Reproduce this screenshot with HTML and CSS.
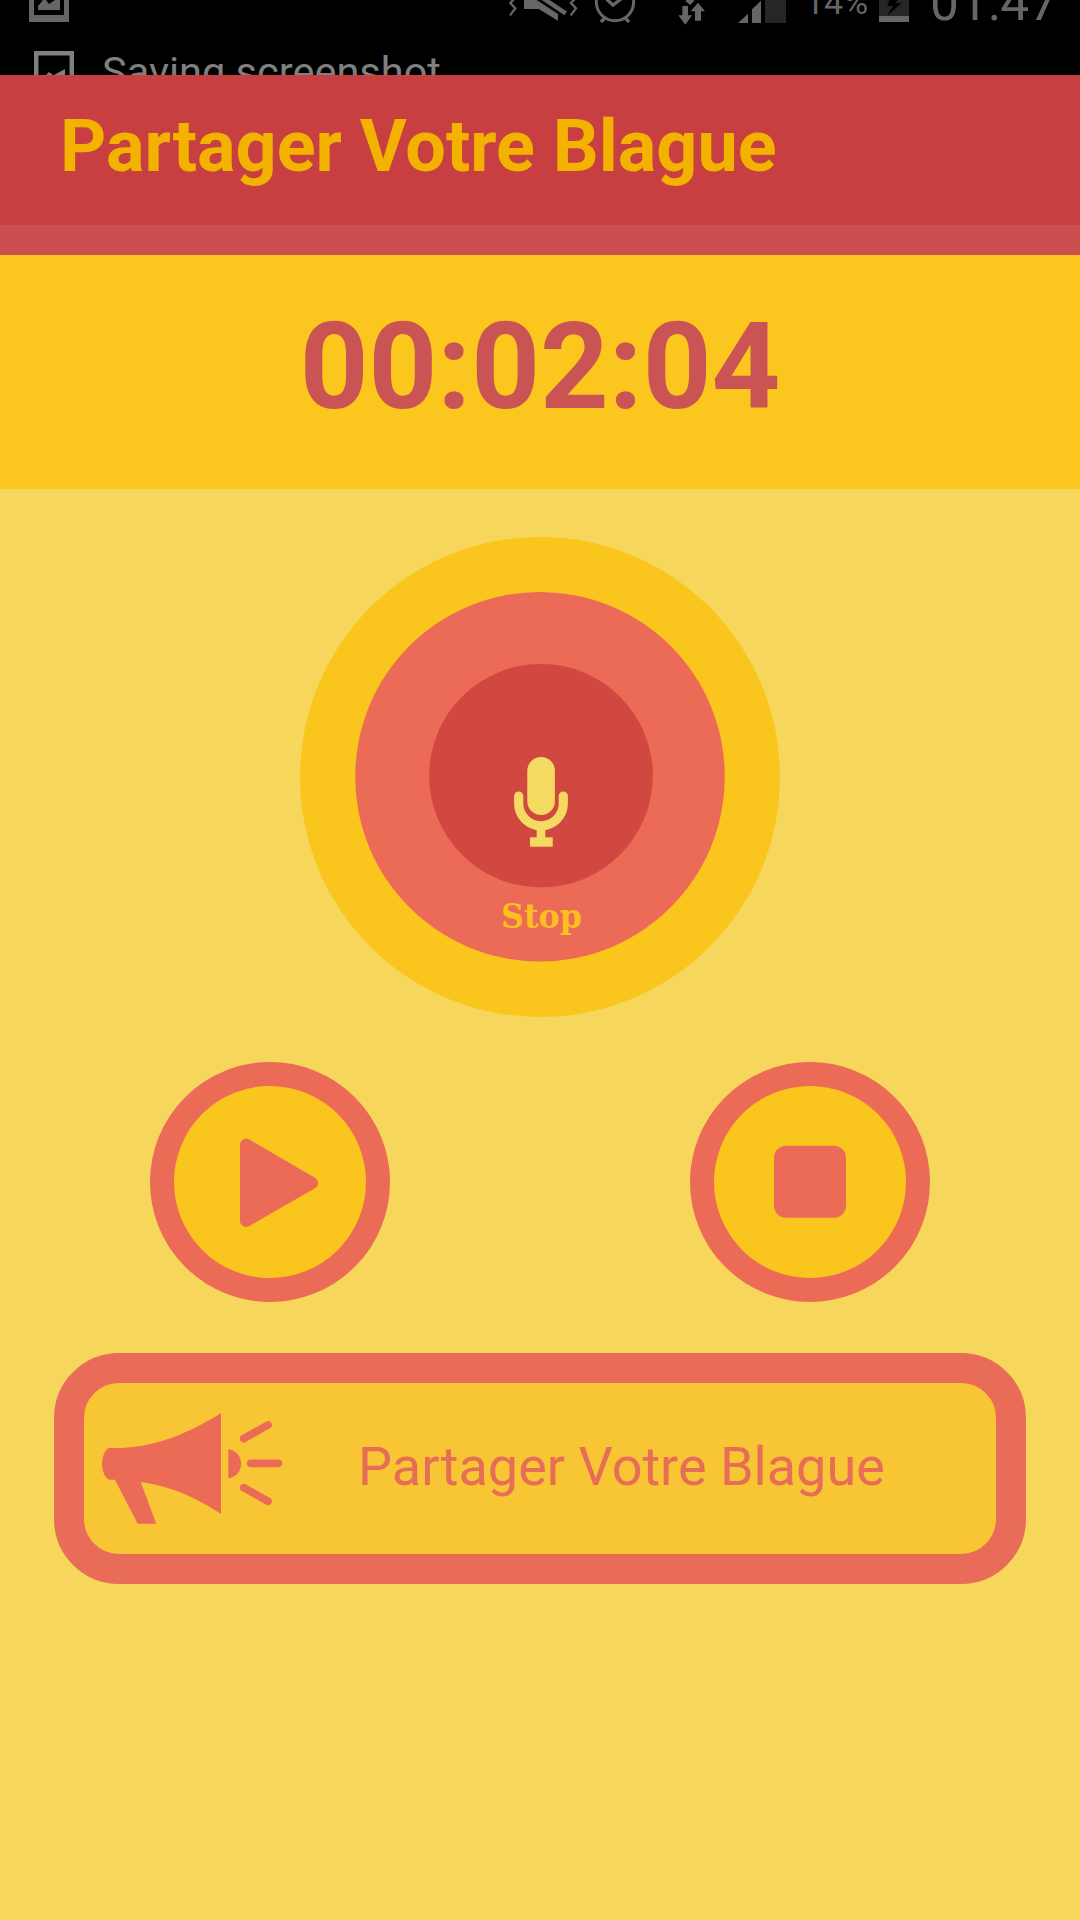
FILE: index.html
```html
<!DOCTYPE html>
<html lang="fr">
<head>
    <meta charset="UTF-8">
    <meta name="viewport" content="width=device-width, initial-scale=1.0">
    <title>Partager Votre Blague</title>
    <link rel="stylesheet" href="styles.css">
</head>
<body>
    <div class="status-bar">
        <div class="status-row">
            <svg class="picture" width="40" height="25" viewBox="0 0 40 25">
                <path fill="#666" d="M0 0H40V22H0Z"/>
                <path fill="#000" d="M5 0H35V15H5Z"/>
                <path fill="#666" d="M9 10V6L14 0H17L20 4L26 0H31V10Z"/>
            </svg>
            <svg class="vibrate" width="70" height="25" viewBox="54 0 210 75">
                <path fill="none" stroke="#666" stroke-width="7" d="M73 -4L61 9L76 25L60 46M255 -4L243 9L258 25L242 46"/>
                <path fill="#666" d="M102 0H140L204 42V62L146 27H102Z"/>
                <path stroke="#666" stroke-width="13" d="M158 -6L227 40"/>
            </svg>
            <svg class="alarm" width="44" height="25" viewBox="309 0 132 75">
                <circle cx="375" cy="6" r="56" fill="none" stroke="#666" stroke-width="9"/>
                <path fill="none" stroke="#666" stroke-width="10" d="M350 -2L369 15L394 -4M333 66L346 52M417 66L404 52"/>
            </svg>
            <svg class="data" width="29" height="25" viewBox="561 0 87 75">
                <path fill="#666" d="M577 18H594V46H606L586 74L565 46H577ZM624 8L645 34H633V62H615V34H602ZM586 3L590 0H610L613 3L600 15Z"/>
            </svg>
            <svg class="signal" width="50" height="25" viewBox="741 0 150 75">
                <path fill="#666" d="M744 69L774 41V69ZM786 69V28L813 2V69Z"/>
                <path fill="#262626" d="M825 0H888V69H825Z"/>
            </svg>
            <span class="percent">14%</span>
            <svg class="battery" width="30" height="25" viewBox="0 0 90 75">
                <path fill="#262626" d="M0 0H90V48H0Z"/>
                <path fill="#666" d="M0 48H90V66H0Z"/>
                <path fill="#000" d="M32 0L24 18H42L24 48L68 9H50L56 0Z"/>
            </svg>
            <span class="clock">01:47</span>
        </div>
        <div class="ticker">
            <svg width="40" height="24" viewBox="0 0 40 24">
                <path fill="none" stroke="#808080" stroke-width="4.5" d="M2.2 26V2.2H37.8V26"/>
                <path fill="#808080" d="M12 24L15 21L19 24ZM20 24L31 18V24Z"/>
            </svg>
            <span>Saving screenshot</span>
        </div>
    </div>

    <header class="header">
        <h1>Partager Votre Blague</h1>
    </header>

    <div class="timer" id="timer">00:02:04</div>

    <main class="recorder">
        <!-- Record button -->
        <button class="record" type="button">
            <svg width="480" height="480" viewBox="0 0 480 480">
                <circle cx="240" cy="240" r="240" fill="#fac51d"/>
                <circle cx="240" cy="239.7" r="184.8" fill="#eb6b57"/>
                <circle cx="241" cy="238.7" r="111.8" fill="#d0483f"/>
                <g fill="#f5da61">
                    <rect x="227.3" y="220" width="27.6" height="58" rx="13.8"/>
                    <rect x="236.7" y="291" width="8.6" height="12"/>
                    <rect x="230" y="300.3" width="22.7" height="9.4"/>
                </g>
                <path fill="none" stroke="#f5da61" stroke-width="9.2" stroke-linecap="round" d="M218.7 259V266.5A22.3 22.3 0 0 0 263.3 266.5V259"/>
                <text class="record-label" x="201" y="390.5" textLength="81" lengthAdjust="spacingAndGlyphs">Stop</text>
            </svg>
        </button>

        <div class="controls">
            <button class="round" type="button">
                <svg width="192" height="192" viewBox="24 24 192 192">
                    <path fill="#eb6b57" stroke="#eb6b57" stroke-width="12" stroke-linejoin="round" d="M96 82.5V159L162 121Z"/>
                </svg>
            </button>
            <button class="round" type="button">
                <svg width="192" height="192" viewBox="24 24 192 192">
                    <rect x="84" y="83.7" width="72" height="72" rx="12" fill="#eb6b57"/>
                </svg>
            </button>
        </div>

        <!-- Share button -->
        <button class="share" type="button">
            <svg width="186" height="117" viewBox="180 210 558 351">
                <g fill="#eb6b57">
                    <path d="M206 324C320 328 420 295 543 220V522C460 468 390 438 302 426L349 551H293L225 419H206C180 400 180 342 206 324Z"/>
                    <path d="M565 328C616 333 616 410 565 415Z"/>
                </g>
                <path stroke="#eb6b57" stroke-width="23" stroke-linecap="round" d="M611 296L684 255M632 370H715M611 443L684 484"/>
            </svg>
            <span>Partager Votre Blague</span>
        </button>
    </main>
</body>
</html>
```

FILE: styles.css
```css
* {
    box-sizing: border-box;
}

body {
    margin: 0;
    min-height: 1920px;
    background: #f6d75b;
    font-family: Roboto, sans-serif;
}

button {
    padding: 0;
    border: none;
    background: none;
    font-family: inherit;
    cursor: pointer;
}

svg {
    display: block;
    flex-shrink: 0;
}

/* Status bar */
.status-bar {
    height: 75px;
    overflow: hidden;
    background: #000;
    color: #666;
}

.status-row {
    display: flex;
    height: 51px;
    padding-left: 29px;
    white-space: nowrap;
}

.vibrate {
    margin-left: 439px;
}

.alarm {
    margin-left: 15px;
}

.data {
    margin-left: 40px;
}

.signal {
    margin-left: 31px;
}

.percent {
    width: 92px;
    padding-left: 18px;
    font-size: 34px;
    line-height: 4px;
}

.clock {
    margin-left: 21px;
    font-size: 51.5px;
    line-height: 6px;
}

.ticker {
    display: flex;
    padding-left: 34px;
    font-size: 41.5px;
    line-height: 42px;
    color: #808080;
}

.ticker span {
    margin-left: 28px;
}

/* Header */
.header {
    height: 180px;
    padding-left: 60px;
    background: #c73f41;
    border-bottom: 30px solid #cc4f50;
}

.header h1 {
    margin: 0;
    font-size: 72px;
    font-weight: 700;
    line-height: 143px;
    color: #f3b200;
}

/* Elapsed time */
.timer {
    height: 234px;
    background: #fbc61d;
    color: #c95453;
    font-size: 120px;
    font-weight: 700;
    line-height: 224px;
    text-align: center;
}

/* Recorder */
.recorder {
    display: flex;
    flex-direction: column;
    align-items: center;
    padding: 48px 54px 0;
}

.record {
    border-radius: 50%;
}

.record-label {
    font-family: "DejaVu Serif Condensed", "DejaVu Serif", serif;
    font-size: 34px;
    font-weight: 700;
    fill: #fbc020;
}

.controls {
    display: flex;
    gap: 300px;
    margin-top: 45px;
}

.round {
    width: 240px;
    height: 240px;
    border: 24px solid #eb6b57;
    border-radius: 50%;
    background: #fac51d;
}

.share {
    display: flex;
    align-items: center;
    width: 972px;
    height: 231px;
    margin-top: 51px;
    padding-left: 16px;
    border: 30px solid #e96c59;
    border-radius: 65px;
    background: #f8c535;
    color: #e76e56;
    font-size: 54px;
}

.share span {
    margin-left: 72px;
    padding-bottom: 5px;
}
```
